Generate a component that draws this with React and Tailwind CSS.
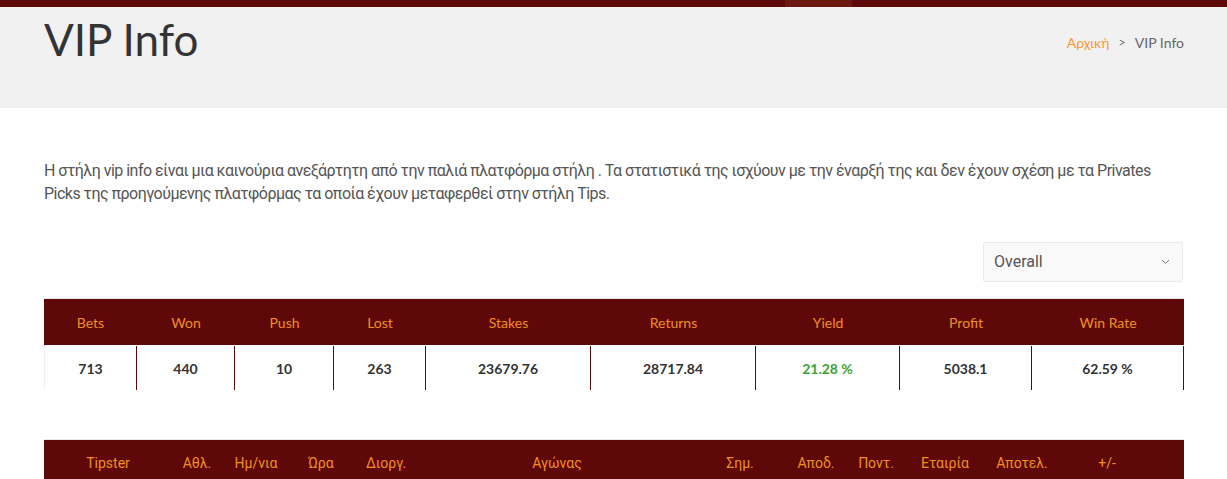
export default function App() {
  const stats = [
    ["Bets", "713", 93],
    ["Won", "440", 98],
    ["Push", "10", 99],
    ["Lost", "263", 92],
    ["Stakes", "23679.76", 165],
    ["Returns", "28717.84", 165],
    ["Yield", "21.28 %", 144],
    ["Profit", "5038.1", 132],
    ["Win Rate", "62.59 %", 152],
  ];
  const cols = [
    ["Tipster", 128],
    ["Αθλ.", 50],
    ["Ημ/νια", 68],
    ["Ώρα", 62],
    ["Διοργ.", 68],
    ["Αγώνας", 274],
    ["Σημ.", 92],
    ["Αποδ.", 60],
    ["Ποντ.", 60],
    ["Εταιρία", 78],
    ["Αποτελ.", 76],
    ["+/-", 94],
    ["", 30],
  ];
  return (
    <div className="w-[1227px] h-[479px] overflow-hidden bg-white" style={{ fontFamily: "Lato, 'Noto Sans', sans-serif" }}>
      <div className="h-[7px] bg-[#5f0809] flex">
        <div className="w-[785px]" />
        <div className="w-[67px] bg-[#6c1710]" />
      </div>
      <div className="h-[101px] bg-[#f1f1f1] flex items-start justify-between pl-[44px] pr-[43px]">
        <h1 className="text-[44px] leading-[62px] text-[#333] font-normal mt-[1px]">VIP Info</h1>
        <div className="flex items-center text-[14px] mt-[25px]">
          <span className="text-[#f7992f]">Αρχική</span>
          <span className="text-[#777] mx-[9px] text-[13px]">&gt;</span>
          <span className="text-[#666]">VIP Info</span>
        </div>
      </div>
      <div className="px-[44px] pt-[51px]">
        <p className="text-[16px] leading-[23px] text-[#555] w-[1140px] tracking-[-0.52px]" style={{ fontFamily: "Roboto, 'Noto Sans', sans-serif" }}>
          Η στήλη vip info είναι μια καινούρια ανεξάρτητη από την παλιά πλατφόρμα στήλη . Τα στατιστικά της ισχύουν με την έναρξή της και δεν έχουν σχέση με τα Privates Picks της προηγούμενης πλατφόρμας τα οποία έχουν μεταφερθεί στην στήλη Tips.
        </p>
        <div className="flex justify-end mt-[37px]">
          <div className="w-[200px] h-[40px] bg-[#f9f9f9] border border-[#eaeaea] rounded-[2px] flex items-center justify-between pl-[10px] pr-[12px] text-[16px] text-[#555]" style={{ fontFamily: "Roboto, sans-serif" }}>
            <span>Overall</span>
            <svg width="9" height="6" viewBox="0 0 9 6" fill="none" stroke="#777" strokeWidth="1">
              <path d="M1 1l3.5 3.5L8 1" />
            </svg>
          </div>
        </div>
        <div className="mt-[16px] w-[1140px] border-t border-[#e6e6e6]">
          <div className="flex bg-[#5f0809] h-[46px]">
            {stats.map(([h, , w]) => (
              <div key={h} style={{ width: w }} className="flex items-center justify-center text-[14px] text-[#f0901e]">
                {h}
              </div>
            ))}
          </div>
          <div className="flex h-[45px] pt-[1px] border-l border-[#eeeeee]">
            {stats.map(([h, v, w], i) => (
              <div
                key={h}
                style={{ width: i === 0 ? w - 1 : w }}
                className={
                  "flex items-center justify-center text-[14px] font-bold border-r border-[#5f0809] " +
                  (h === "Yield" ? "text-[#3aa335]" : "text-[#333]")
                }
              >
                {v}
              </div>
            ))}
          </div>
        </div>
        <div className="mt-[49px] w-[1140px] border-t border-[#e6e6e6]">
          <div className="flex bg-[#5f0809] h-[46px] items-center" style={{ fontFamily: "Roboto, sans-serif" }}>
            {cols.map(([h, w], i) => (
              <div key={i} style={{ width: w }} className="text-[14px] text-[#f0901e] text-center whitespace-nowrap">
                {h}
              </div>
            ))}
          </div>
        </div>
      </div>
    </div>
  );
}
